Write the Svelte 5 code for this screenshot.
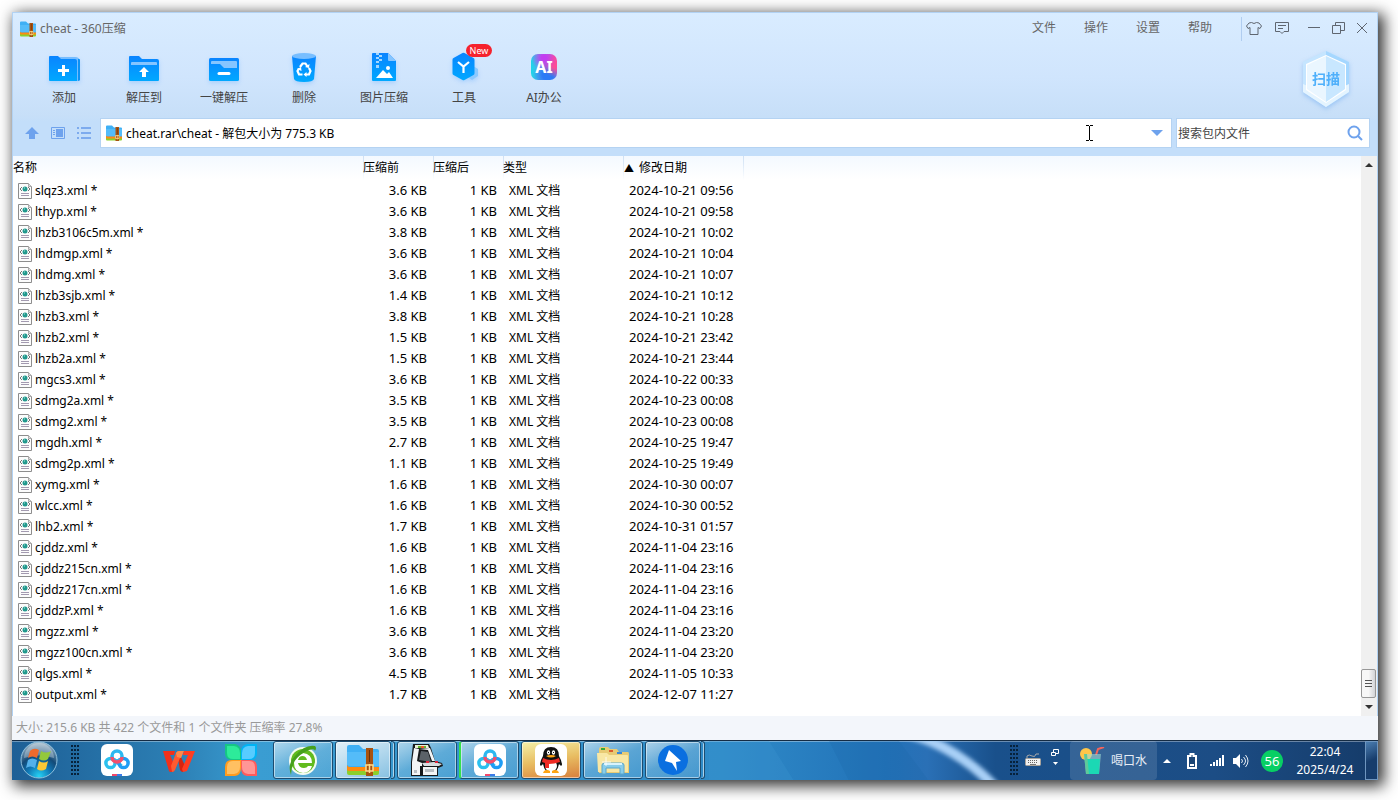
<script lang="ts">
  interface Entry {
    name: string;
    size: string;
    date: string;
  }

  const menus = ["文件", "操作", "设置", "帮助"];

  const tools = [
    { id: "add", label: "添加" },
    { id: "extract", label: "解压到" },
    { id: "quick", label: "一键解压" },
    { id: "delete", label: "删除" },
    { id: "image", label: "图片压缩" },
    { id: "tools", label: "工具" },
    { id: "ai", label: "AI办公" },
  ];

  const entries: Entry[] = [
    { name: "slqz3.xml", size: "3.6 KB", date: "2024-10-21 09:56" },
    { name: "lthyp.xml", size: "3.6 KB", date: "2024-10-21 09:58" },
    { name: "lhzb3106c5m.xml", size: "3.8 KB", date: "2024-10-21 10:02" },
    { name: "lhdmgp.xml", size: "3.6 KB", date: "2024-10-21 10:04" },
    { name: "lhdmg.xml", size: "3.6 KB", date: "2024-10-21 10:07" },
    { name: "lhzb3sjb.xml", size: "1.4 KB", date: "2024-10-21 10:12" },
    { name: "lhzb3.xml", size: "3.8 KB", date: "2024-10-21 10:28" },
    { name: "lhzb2.xml", size: "1.5 KB", date: "2024-10-21 23:42" },
    { name: "lhzb2a.xml", size: "1.5 KB", date: "2024-10-21 23:44" },
    { name: "mgcs3.xml", size: "3.6 KB", date: "2024-10-22 00:33" },
    { name: "sdmg2a.xml", size: "3.5 KB", date: "2024-10-23 00:08" },
    { name: "sdmg2.xml", size: "3.5 KB", date: "2024-10-23 00:08" },
    { name: "mgdh.xml", size: "2.7 KB", date: "2024-10-25 19:47" },
    { name: "sdmg2p.xml", size: "1.1 KB", date: "2024-10-25 19:49" },
    { name: "xymg.xml", size: "1.6 KB", date: "2024-10-30 00:07" },
    { name: "wlcc.xml", size: "1.6 KB", date: "2024-10-30 00:52" },
    { name: "lhb2.xml", size: "1.7 KB", date: "2024-10-31 01:57" },
    { name: "cjddz.xml", size: "1.6 KB", date: "2024-11-04 23:16" },
    { name: "cjddz215cn.xml", size: "1.6 KB", date: "2024-11-04 23:16" },
    { name: "cjddz217cn.xml", size: "1.6 KB", date: "2024-11-04 23:16" },
    { name: "cjddzP.xml", size: "1.6 KB", date: "2024-11-04 23:16" },
    { name: "mgzz.xml", size: "3.6 KB", date: "2024-11-04 23:20" },
    { name: "mgzz100cn.xml", size: "3.6 KB", date: "2024-11-04 23:20" },
    { name: "qlgs.xml", size: "4.5 KB", date: "2024-11-05 10:33" },
    { name: "output.xml", size: "1.7 KB", date: "2024-12-07 11:27" },
  ];

  // look: pinned has no frame, stack has extra windows behind it
  const apps = [
    { id: "netdisk", title: "百度网盘", look: "pinned" },
    { id: "wps", title: "WPS", look: "pinned" },
    { id: "petals", title: "桌面", look: "pinned" },
    { id: "browser", title: "浏览器", look: "open" },
    { id: "zip", title: "360压缩", look: "active stack" },
    { id: "arcade", title: "街机", look: "open" },
    { id: "netdisk", title: "百度网盘", look: "open busy" },
    { id: "qq", title: "QQ", look: "alert" },
    { id: "explorer", title: "资源管理器", look: "open" },
    { id: "thunder", title: "迅雷", look: "open stack" },
  ];

  let path = $state("cheat.rar\\cheat - 解包大小为 775.3 KB");
  let query = $state("");
</script>

{#snippet zipIcon()}
  <svg viewBox="0 0 32 32" aria-hidden="true">
    <path d="M0 24h32v5a2 2 0 0 1-2 2H2a2 2 0 0 1-2-2z" fill="#8ccf2c" />
    <path d="M0 21h32v6H2a2 2 0 0 1-2-2z" fill="#ff8a10" />
    <path d="M0 3a2 2 0 0 1 2-2h10l4 4h14a2 2 0 0 1 2 2v16H3a3 3 0 0 1-3-3z" fill="#3fb0f5" />
    <path d="M0 8h32v14H3a3 3 0 0 1-3-3z" fill="#62c4fb" opacity=".6" />
    <path d="M19 4h7v28h-7z" fill="#a8520f" />
    <path d="M22 6h1v12h-1z" fill="#6b3008" />
    <path d="M19 21h7v6h-7zM22.500 20v9" fill="none" stroke="#ffdb8a" stroke-width="1.500" />
  </svg>
{/snippet}

{#snippet fileIcon()}
  <svg class="file-icon" viewBox="0 0 14 16" aria-hidden="true">
    <path d="M.5.500h10l3 3v12H.500z" fill="#fcfcfc" stroke="#8d8d8d" />
    <path d="M10.500.500v3h3" fill="#ddd" stroke="#aaa" />
    <path d="M4 4 2 6l2 2M10 4l2 2-2 2" fill="none" stroke="#777" />
    <circle cx="7" cy="6" r="2.500" fill="#22998e" />
    <path d="M6 5h1" stroke="#a5e4d5" />
    <path d="M3 10.500h8M3 12.500h8" stroke="#a39ab0" />
  </svg>
{/snippet}

{#snippet toolIcon(id: string)}
  <svg class="tool-icon" viewBox="0 0 32 32" aria-hidden="true">
    <defs>
      <linearGradient id="blue-{id}" x1="0" y1="0" x2="0" y2="1">
        <stop offset="0" stop-color="#0a84ff" />
        <stop offset="1" stop-color="#00a8ff" />
      </linearGradient>
    </defs>
    {#if id === "add"}
      <path d="M4 6h23a5 5 0 0 1 5 4v19a1 1 0 0 1-1 1H4z" fill="#76bdff" />
      <path d="M30 8h1a1 1 0 0 1 1 1v20l-2 1z" fill="#0b92f5" />
      <path d="M1 6a1 1 0 0 1 1-1h8l3 3h14a2 2 0 0 1 2 2v20H2a1 1 0 0 1-1-1z" fill="url(#blue-{id})" />
      <path d="M15.500 14v11M10 19.500h11" stroke="#fff" stroke-width="3" />
    {:else if id === "extract"}
      <path d="M1 6a1 1 0 0 1 1-1h9l3 3h15a2 2 0 0 1 2 2v19a1 1 0 0 1-1 1H2a1 1 0 0 1-1-1z" fill="url(#blue-{id})" />
      <path d="M3 14v-2a1 1 0 0 1 1-1h24a1 1 0 0 1 1 1v2z" fill="#86c5ff" />
      <path d="m16 16 5 5h-3v5h-4v-5h-3z" fill="#fff" />
    {:else if id === "quick"}
      <rect x="1" y="7" width="30" height="23" rx="1.500" fill="url(#blue-{id})" />
      <path d="M3 11a1 1 0 0 1 1-1h24a1 1 0 0 1 1 1v6H16l-4-4H3z" fill="#86c5ff" />
      <path d="M11 22.500h10" stroke="#fff" stroke-width="3" stroke-linecap="round" />
    {:else if id === "delete"}
      <path d="m4 5 2 23q1 3 10 3t10-3l2-23z" fill="url(#blue-{id})" />
      <ellipse cx="16" cy="5" rx="12" ry="3" fill="#78beff" />
      <path d="m12 16 2.500-3.500h3l2 3M21 17l1.500 3-1.500 3.500h-3M14.500 23.500H11L9.500 20l1.500-2.500" fill="none" stroke="#fff" stroke-width="2.200" />
      <path d="m17 16 4 1 .500-4zM18.500 21v5l-3-2.500zM9 18l4-2 .500 4z" fill="#fff" />
    {:else if id === "image"}
      <path d="M4 3a1 1 0 0 1 1-1h15l8 8v19a1 1 0 0 1-1 1H5a1 1 0 0 1-1-1z" fill="url(#blue-{id})" />
      <path d="M20 2v7a1 1 0 0 0 1 1h7z" fill="#86c5ff" />
      <path d="M8 2h3v2H8zM11 4h3v2h-3zM8 6h3v2H8zM11 8h3v2h-3zM8 10h3v2H8zM8 14h3v3H8z" fill="#a3d6ff" />
      <circle cx="20" cy="17" r="2" fill="#fff" />
      <path d="m8 27 7-8 4 4 2-2 4 6z" fill="#fff" />
    {:else if id === "tools"}
      <path d="m25 15 5 3v7l-6 4-6-4z" fill="#8bc9ff" />
      <path d="M14.500 2a2 2 0 0 1 2 0l9 5a2 2 0 0 1 1 2v13a2 2 0 0 1-1 2l-9 5a2 2 0 0 1-2 0l-9-5a2 2 0 0 1-1-2V9a2 2 0 0 1 1-2z" fill="url(#blue-{id})" />
      <path d="m10 11 5.500 4.500L21 11M15.500 15.500V22" fill="none" stroke="#fff" stroke-width="2.200" />
    {/if}
  </svg>
{/snippet}

{#snippet netdiskIcon()}
  <svg viewBox="0 0 32 32" aria-hidden="true">
    <rect width="32" height="32" rx="6" fill="#fff" />
    <g fill="none" stroke-width="3.500">
      <path d="m12.500 15 8 7" stroke="#2bc0ee" />
      <circle cx="9.500" cy="19" r="4.600" stroke="#2bc0ee" />
      <path d="m19.500 15-4 4" stroke="#1f8cf0" />
      <circle cx="22.500" cy="19" r="4.600" stroke="#1f9df5" />
      <circle cx="16" cy="12" r="5" stroke="#2db8f0" />
      <path d="M11 13a5 5 0 0 0 10 0" stroke="#f4506c" />
    </g>
    <path d="M11 30h5v2h-5z" fill="#f2486a" />
    <path d="M16 30h5v2h-5z" fill="#3b7be8" />
  </svg>
{/snippet}

{#snippet appIcon(id: string)}
  {#if id === "netdisk"}
    {@render netdiskIcon()}
  {:else if id === "zip"}
    {@render zipIcon()}
  {:else if id === "wps"}
    <svg viewBox="0 0 32 32" aria-hidden="true">
      <path d="M0 7h12l-1 4H7l5 11-1 5q-1 1-3 1t-2-1z" fill="#f2301a" />
      <path d="m15 15 3-2 4 9-2 6q-2 0-3-2z" fill="#d8240f" />
      <path d="M9 28q2 0 3-2l8-19h-4q-2 0-3 2L8 22z" fill="#ff5a30" />
      <path d="M13 9q1-2 3-2h5l-3 7-4-1z" fill="#ff8848" />
      <path d="m20 28 4-1 8-20H21l-1 4h5l-6 14z" fill="#ff3d22" />
    </svg>
  {:else if id === "petals"}
    <svg viewBox="0 0 32 32" aria-hidden="true">
      <path d="M0 0h10q6 1 6 8v8H7q-7 0-7-7z" fill="#16c784" />
      <path d="M32 0H22q-6 1-6 8v8h9q7 0 7-7z" fill="#00b4f5" />
      <path d="M0 32h10q6-1 6-8v-8H7q-7 0-7 7z" fill="#ff9b1e" />
      <path d="M32 32H22q-6-1-6-8v-8h9q7 0 7 7z" fill="#ff5b5b" />
      <path d="M2 2h7q6 1 6 7v6H8q-6 0-6-6z" fill="#2deb9a" />
      <path d="M30 2h-7q-6 1-6 7v6h7q6 0 6-6z" fill="#57ccff" />
      <path d="M2 30h7q6-1 6-7v-6H8q-6 0-6 6z" fill="#ffc062" />
      <path d="M30 30h-7q-6-1-6-7v-6h7q6 0 6 6z" fill="#ff9696" />
    </svg>
  {:else if id === "browser"}
    <svg viewBox="0 0 32 32" aria-hidden="true">
      <circle cx="16" cy="17" r="14" fill="#f4fbf0" />
      <circle cx="16" cy="17" r="12" fill="#62bb1e" />
      <path d="M24 19H11q1 5 6 5 3 0 4-2h4q-2 7-9 7-9-1-9-10 1-10 9-10 9 1 9 10zM11 16h9q-1-4-4.500-4T11 16z" fill="#fff" />
      <path d="M4 31Q0 20 8 12 18 0 28 2q2 2 0 5 0-3-6-1Q12 10 7 18q-3 7-3 13z" fill="#46a01c" />
    </svg>
  {:else if id === "arcade"}
    <svg viewBox="0 0 32 32" aria-hidden="true">
      <path d="M2 0h16l2 4 4 13 7 2 1 3-5 2v8H0V18z" fill="#16191c" />
      <path d="M3 4 1 18v13h8v-9h2v-3L6 17 8 5zM12 23h14v8H12zM8 5l9 1 4 11h3L19 4z" fill="#f3f5f6" />
      <path d="M4 1h13l1 3H4z" fill="#eaf0d8" />
      <path d="M7 2h8v2H7z" fill="#62b82a" />
      <path d="M10 2h3v2h-3z" fill="#f05a2a" />
      <path d="m10 7 7 1 3 10-12-2z" fill="#5b6268" />
      <path d="m11 19 12-1 8 2-3 2H13z" fill="#d8dde0" />
      <path d="M15 17h3v2h-3zM24 17h3v2h-3z" fill="#e0263c" />
      <path d="M14 25h9v3h-9zM3 26h3v3H3z" fill="#b9bfc4" />
    </svg>
  {:else if id === "qq"}
    <svg viewBox="0 0 32 32" aria-hidden="true">
      <rect width="32" height="32" rx="6" fill="#fff" />
      <path d="M16 3q8 0 8 9 3 5 3 9-1 2-3-1-1 5-3 7H11q-2-2-3-7-2 3-3 1 0-4 3-9 0-9 8-9z" fill="#111" />
      <ellipse cx="16" cy="22" rx="6" ry="5.500" fill="#fff" />
      <path d="M8 14q8 4 16 0l1 4q-6 2-11 2v4h-4v-5l-3-1z" fill="#ee2a24" />
      <ellipse cx="13.500" cy="8.500" rx="1.600" ry="2.300" fill="#fff" />
      <ellipse cx="18.500" cy="8.500" rx="1.600" ry="2.300" fill="#fff" />
      <path d="M13.500 8v1M18.500 8v1" stroke="#111" />
      <path d="M11 12q5-2 10 0-5 3-10 0zM9 27q3-2 6 0v2H8zM23 27q-3-2-6 0v2h7z" fill="#ffa514" />
    </svg>
  {:else if id === "explorer"}
    <svg viewBox="0 0 32 32" aria-hidden="true">
      <path d="M2 5q0-2 2-2h7l2 2h7l2 3h9q1 0 1 2v19H2z" fill="#e8cb74" />
      <path d="M4 4h4v2H4z" fill="#36a83a" />
      <path d="M12 6h4v2h-4z" fill="#dc5b2c" />
      <path d="M20 8h5v2h-5z" fill="#3687d8" />
      <path d="M0 9h10l2 2h18q1 0 1 1v16H1z" fill="#f8e7a4" />
      <path d="M5 30V21q0-2 3-2h16q3 0 3 2v9h-4v-6H9v6z" fill="#88cdea" stroke="#5aa6ca" />
      <path d="M7 20h18" stroke="#d8f3fc" stroke-width="2" />
      <path d="M9 13v9M5 18h9" stroke="#fff" opacity=".8" />
    </svg>
  {:else if id === "thunder"}
    <svg viewBox="0 0 32 32" aria-hidden="true">
      <circle cx="16" cy="16" r="15" fill="#0a6fe0" />
      <path d="m12 6-4 11 7 2 5 8-1-9 5-1z" fill="#fff" />
    </svg>
  {/if}
{/snippet}

{#snippet grip()}
  <span class="grip"></span>
{/snippet}

<div class="desktop">
  <div class="window">
    <header class="chrome">
      <div class="titlebar">
        <span class="small-icon">{@render zipIcon()}</span>
        <h1>cheat - 360压缩</h1>
        <nav class="menus">
          {#each menus as menu}
            <button>{menu}</button>
          {/each}
        </nav>
        <div class="controls">
          <button aria-label="皮肤">
            <svg viewBox="0 0 16 16"><path d="M5.500 1.500 3 2 .500 5 2 7.500l2-1v7h8v-7l2 1L15.500 5 13 2l-2.500-.500Q8 3.500 5.500 1.500z" /></svg>
          </button>
          <button aria-label="反馈">
            <svg viewBox="0 0 16 16"><path d="M1.500 1.500h13v9H10l-2 2-2-2H1.500zM4 4.500h8M4 7.500h5" /></svg>
          </button>
          <button class="gap" aria-label="最小化">
            <svg viewBox="0 0 16 16"><path d="M2 6.500h12" /></svg>
          </button>
          <button aria-label="还原">
            <svg viewBox="0 0 16 16"><path d="M2.500 4.500h8v8h-8zM5.500 4V1.500h9v8H11" /></svg>
          </button>
          <button aria-label="关闭">
            <svg viewBox="0 0 16 16"><path d="m3 2 10 10M13 2 3 12" /></svg>
          </button>
        </div>
      </div>

      <div class="toolbar">
        {#each tools as tool}
          <button class="tool">
            {#if tool.id === "ai"}
              <span class="ai-icon">AI</span>
            {:else}
              {@render toolIcon(tool.id)}
            {/if}
            <span>{tool.label}</span>
            {#if tool.id === "tools"}
              <em class="badge">New</em>
            {/if}
          </button>
        {/each}
        <button class="scan">
          <svg viewBox="0 0 48 58" aria-hidden="true">
            <path d="M24 1 47 12v30L24 57 1 42V12z" fill="#c5e5ff" />
            <path d="M24 1 47 12v30L24 57z" fill="#a5d7ff" />
            <path d="M1 34 24 44l23-10v8L24 57 1 42z" fill="#e4f4ff" />
            <path d="m24 5 20 9v26L24 53 4 40V14z" fill="#fff" />
            <path d="m24 6 19 9v24L24 52z" fill="#c8e7ff" />
            <path d="M24 6v46L5 39V15z" fill="#eaf6ff" />
          </svg>
          <span>扫描</span>
        </button>
      </div>

      <div class="location">
        <button aria-label="向上">
          <svg viewBox="0 0 14 14"><path d="m7 1 7 7h-4v5H4V8H0z" fill="#6ea2ed" /></svg>
        </button>
        <button aria-label="图标视图">
          <svg viewBox="0 0 14 14"><path d="M.500 1.500h13v11H.500z" fill="none" stroke="#6ea2ed" /><path d="M2 4h2v1H2zM2 6h2v1H2zM2 8h2v1H2zM5 3h7v8H5z" fill="#6ea2ed" /></svg>
        </button>
        <button aria-label="列表视图">
          <svg viewBox="0 0 14 14"><path d="M0 1h2v2H0zM0 6h2v2H0zM0 11h2v2H0zM4 1h10v2H4zM4 6h10v2H4zM4 11h10v2H4z" fill="#7dabee" /></svg>
        </button>
        <div class="address">
          <span class="small-icon">{@render zipIcon()}</span>
          <input type="text" aria-label="路径" bind:value={path} />
          <svg class="caret" viewBox="0 0 9 16" aria-hidden="true"><path d="M1 .500h3M5 .500h3M4.500 1v14M1 15.500h3M5 15.500h3" stroke="#000" /></svg>
          <button aria-label="历史">
            <svg viewBox="0 0 14 14"><path d="M1 4h12L7 10z" fill="#6ea2ed" /></svg>
          </button>
        </div>
        <div class="search">
          <input type="text" aria-label="搜索" placeholder="搜索包内文件" bind:value={query} />
          <button aria-label="搜索">
            <svg viewBox="0 0 16 16"><path d="m11 11 4 4" stroke="#6ea2ed" stroke-width="2" /><circle cx="7" cy="7" r="5.500" fill="none" stroke="#6ea2ed" stroke-width="2" /></svg>
          </button>
        </div>
      </div>
    </header>

    <main class="list">
      <table>
        <colgroup>
          <col class="col-name" />
          <col class="col-size" />
          <col class="col-size" />
          <col class="col-wide" />
          <col class="col-wide" />
          <col />
        </colgroup>
        <thead>
          <tr>
            <th>名称</th>
            <th>压缩前</th>
            <th>压缩后</th>
            <th>类型</th>
            <th class="sorted"><span>▲</span>修改日期</th>
            <th></th>
          </tr>
        </thead>
        <tbody>
          {#each entries as entry}
            <tr>
              <td class="name"><div>{@render fileIcon()}{entry.name} *</div></td>
              <td class="number">{entry.size}</td>
              <td class="number">1 KB</td>
              <td>XML 文档</td>
              <td class="date">{entry.date}</td>
              <td></td>
            </tr>
          {/each}
        </tbody>
      </table>
      <div class="scrollbar">
        <button aria-label="向上滚动"><svg viewBox="0 0 8 4"><path d="m4 0 4 4H0z" fill="#333" /></svg></button>
        <div class="track"><div class="thumb"></div></div>
        <button aria-label="向下滚动"><svg viewBox="0 0 8 4"><path d="m4 4 4-4H0z" fill="#333" /></svg></button>
      </div>
    </main>

    <footer class="status">大小: 215.6 KB 共 422 个文件和 1 个文件夹 压缩率 27.8%</footer>

    <div class="taskbar">
      <button class="start" aria-label="开始">
        <svg viewBox="0 0 38 38" aria-hidden="true">
          <defs>
            <radialGradient id="orb" cx=".5" cy=".95" r=".95">
              <stop offset="0" stop-color="#25d3f5" />
              <stop offset=".35" stop-color="#0f76b4" />
              <stop offset=".6" stop-color="#134a77" />
              <stop offset="1" stop-color="#a4bccd" />
            </radialGradient>
          </defs>
          <circle cx="19" cy="19" r="18" fill="url(#orb)" stroke="#8fc0dc" />
          <path d="M4 17a15 15 0 0 1 30 0q-15-5-30 0z" fill="#fff" opacity=".3" />
          <path d="m10 10q4-4 9-1l-2 8q-5-3-9 0z" fill="#ee6a2c" />
          <path d="m21 10q5 3 10 0l-3 8q-4 3-9 0z" fill="#93c83c" />
          <path d="m8 19q4-3 9 0l-2 8q-5-3-9 0z" fill="#54b1ea" />
          <path d="m19 20q5 3 9 0l-2 8q-5 3-9 0z" fill="#fbc936" />
        </svg>
      </button>
      {@render grip()}
      <div class="apps">
        {#each apps as app}
          <button class="app {app.look}" aria-label={app.title}>
            <span class="face">{@render appIcon(app.id)}</span>
          </button>
        {/each}
      </div>
      <div class="sky">
        <svg viewBox="0 0 300 40" aria-hidden="true">
          <defs>
            <filter id="soft" x="-20%" y="-20%" width="140%" height="140%"><feGaussianBlur stdDeviation="2" /></filter>
          </defs>
          <path d="M0 0h60l25 40H0z" fill="#3b94d0" opacity=".3" />
          <path d="M120 0h70l30 40h-80z" fill="#1962a6" opacity=".2" />
          <path d="M190-10q54 12 96 56" fill="none" stroke="#a9d0f7" stroke-width="10" filter="url(#soft)" />
        </svg>
      </div>
      <div class="tray">
        {@render grip()}
        <svg class="keyboard" viewBox="0 0 16 16" aria-hidden="true">
          <path d="M2 5V3q2-2 5 0t4-2h3" fill="none" stroke="#aaa" />
          <rect x=".5" y="5.500" width="15" height="7" rx="1" fill="#f0f0f0" stroke="#a8a29a" />
          <path d="M3 7.500h10M3 9.500h10" stroke="#666" stroke-dasharray="1 1" />
          <path d="M5 11.500h6" stroke="#777" />
        </svg>
        <svg class="lang" viewBox="0 0 8 24" aria-hidden="true">
          <path d="M.5 3.500h4v3h-4zM2.500 3V.500h5v4H5" fill="none" stroke="#fff" />
          <path d="M2 13h5l-2.500 3z" fill="#fff" />
        </svg>
        <button class="drink">
          <svg viewBox="0 0 26 28" aria-hidden="true">
            <circle cx="7" cy="7" r="6" fill="#ffc64a" />
            <path d="m17 8 2-6 6-2" fill="none" stroke="#f4645c" stroke-width="2" />
            <path d="M5 7h17l-2 20H7z" fill="#9edbd4" opacity=".6" />
            <path d="M6 12h15l-1 15H8z" fill="#1bd8b4" />
            <path d="M5 7h3l2 20H7z" fill="#5fc89a" />
          </svg>
          <span>喝口水</span>
        </button>
        <button class="icon more" aria-label="更多"><svg viewBox="0 0 8 4"><path d="m4 0 4 4H0z" fill="#fff" /></svg></button>
        <svg class="icon battery" viewBox="0 0 10 16" aria-hidden="true"><path d="M1 3h2.500V1h3v2H9v12H1z" fill="#1c4676" stroke="#fff" stroke-width="2" /><path d="M3 11h4v2H3z" fill="#fff" /></svg>
        <svg class="icon" viewBox="0 0 16 16" aria-hidden="true"><path d="M1 11h2v2H1zM4 9h2v4H4zM7 7h2v6H7zM10 5h2v8h-2zM13 2h2v11h-2z" fill="#fff" /></svg>
        <svg class="icon" viewBox="0 0 16 16" aria-hidden="true"><path d="M0 5h3l4-4v14l-4-4H0z" fill="#fff" /><path d="M8.500 6q2 2 0 4M10.500 4q4 4 0 8M12.500 2q5 6 0 12" fill="none" stroke="#e8eef5" /></svg>
        <span class="score">56</span>
        <time class="clock">22:04<br />2025/4/24</time>
        <button class="peek" aria-label="显示桌面"></button>
      </div>
    </div>
  </div>
</div>

<style>
  :global(body) {
    background: #fff;
  }

  .desktop {
    box-sizing: border-box;
    min-height: 100vh;
    padding: 12px 20px 20px 12px;
    display: flex;
    font-family: "Noto Sans", "Noto Sans CJK SC", sans-serif;
    font-size: 12px;
    line-height: 20px;
    color: #000;
  }

  .window {
    flex: 1;
    min-width: 0;
    display: flex;
    flex-direction: column;
    background: #c3defa;
    box-shadow: 4px 4px 14px 2px rgba(0, 0, 0, 0.8);
  }

  button {
    padding: 0;
    border: none;
    background: none;
    font: inherit;
    color: inherit;
    cursor: pointer;
  }

  input {
    flex: 1;
    min-width: 0;
    padding: 2px 0 0;
    border: none;
    outline: none;
    background: none;
    font: inherit;
    color: #000;
  }

  svg {
    display: block;
  }

  .chrome {
    box-sizing: border-box;
    height: 144px;
    border: 1px solid #b2d2f3;
    border-bottom: none;
    background: linear-gradient(#d9ecff, #d0e5fd 45%, #c7dff8 72%, #c3defa 76%);
  }

  .titlebar {
    display: flex;
    align-items: center;
    height: 31px;
    padding: 0 7px;
    color: #666;
  }

  .small-icon {
    flex: none;
    width: 16px;
    height: 16px;
  }

  h1 {
    margin: 0 0 0 4px;
    font-size: 12px;
    font-weight: 400;
  }

  .menus {
    display: flex;
    margin: 0 15px 2px auto;
  }

  .menus button {
    width: 52px;
  }

  .controls {
    display: flex;
    align-items: center;
    gap: 8px;
    height: 24px;
    padding-left: 4px;
    border-left: 1px solid #b0cdf0;
  }

  .controls button {
    width: 16px;
    height: 16px;
  }

  .controls button:nth-child(2) {
    margin-left: 4px;
  }

  .controls .gap {
    margin-left: 8px;
  }

  .controls svg {
    fill: none;
    stroke: #5f6670;
  }

  .toolbar {
    display: flex;
    height: 69px;
    padding: 0 27px 0 11px;
  }

  .tool {
    position: relative;
    display: flex;
    flex-direction: column;
    align-items: center;
    gap: 5px;
    width: 80px;
    padding-top: 7px;
    color: #444;
  }

  .tool-icon {
    width: 32px;
    height: 32px;
    filter: drop-shadow(0 2px 2px rgba(60, 150, 255, 0.25));
  }

  .ai-icon {
    width: 26px;
    height: 26px;
    margin: 3px;
    border-radius: 7px;
    background:
      radial-gradient(circle at 50% 15%, #c33df0 10%, transparent 50%),
      radial-gradient(circle at 100% 30%, #fb4d96 20%, transparent 50%),
      radial-gradient(circle at 65% 80%, #2c7bf5 20%, transparent 55%),
      linear-gradient(90deg, #1bd6ea, #bb72e0);
    color: #fff;
    font-size: 16px;
    font-weight: 700;
    line-height: 26px;
  }

  .badge {
    position: absolute;
    top: 0;
    left: 42px;
    width: 26px;
    border-radius: 7px;
    background: #f5222d;
    color: #fff;
    font-size: 9px;
    font-style: normal;
    line-height: 13px;
  }

  .scan {
    display: grid;
    align-self: flex-start;
    place-items: center;
    margin: 6px 0 0 auto;
    filter: drop-shadow(0 2px 2px rgba(110, 170, 240, 0.5));
  }

  .scan svg,
  .scan span {
    grid-area: 1 / 1;
  }

  .scan svg {
    width: 48px;
    height: 58px;
  }

  .scan span {
    color: #4fb0fb;
    font-size: 14px;
    font-weight: 700;
  }

  .location {
    display: flex;
    align-items: center;
    height: 40px;
    padding: 0 7px 0 12px;
  }

  .location > button {
    width: 14px;
    height: 14px;
    margin-right: 12px;
  }

  .address,
  .search {
    display: flex;
    align-items: center;
    box-sizing: border-box;
    height: 30px;
    border: 1px solid #b5d3f2;
    background: #fff;
  }

  .address {
    position: relative;
    flex: 1;
    gap: 4px;
    margin-right: 4px;
    margin-left: -3px;
    padding: 0 7px 0 5px;
  }

  .address button {
    width: 14px;
    height: 14px;
  }

  .caret {
    position: absolute;
    top: 6px;
    right: 77px;
    width: 9px;
    height: 16px;
  }

  .search {
    width: 194px;
    padding: 0 6px 0 1px;
  }

  .search input::placeholder {
    color: #444;
    opacity: 1;
  }

  .search button {
    width: 16px;
    height: 16px;
  }

  .list {
    flex: 1;
    display: flex;
    align-items: flex-start;
    border: 1px solid #b2d2f3;
    border-width: 0 1px;
    background: linear-gradient(#f3f9ff, #fff 24px);
  }

  table {
    flex: 1;
    min-width: 0;
    table-layout: fixed;
    border-collapse: collapse;
  }

  .col-name {
    width: 350px;
  }

  .col-size {
    width: 70px;
  }

  .col-wide {
    width: 120px;
  }

  th {
    height: 24px;
    padding: 0;
    font-weight: 400;
    text-align: left;
    background: linear-gradient(#cfe0f3, transparent) no-repeat left / 1px 100%;
  }

  th:first-child {
    background: none;
  }

  .sorted span {
    display: inline-block;
    width: 16px;
    font-size: 10px;
    text-indent: 1px;
  }

  td {
    height: 21px;
    padding: 0 6px;
    line-height: 21px;
    white-space: nowrap;
  }

  .name {
    padding-left: 5px;
  }

  .name div {
    display: flex;
    align-items: center;
    gap: 3px;
    white-space: pre;
  }

  .number,
  .date {
    font-size: 13px;
  }

  .number {
    text-align: right;
  }

  .file-icon {
    width: 14px;
    height: 16px;
  }

  .scrollbar {
    align-self: stretch;
    display: flex;
    flex-direction: column;
    width: 15px;
    padding-right: 1px;
    background: #f0f0f0;
  }

  .scrollbar button {
    display: grid;
    place-items: center;
    height: 18px;
  }

  .scrollbar svg {
    width: 8px;
    height: 4px;
  }

  .track {
    flex: 1;
    display: flex;
    flex-direction: column;
    justify-content: flex-end;
  }

  .thumb {
    height: 27px;
    border: 1px solid #979797;
    border-radius: 2px;
    background:
      repeating-linear-gradient(#555 0 1px, transparent 1px 3px) no-repeat center / 7px 7px,
      linear-gradient(90deg, #f7f7f7 50%, #d2d3d6);
  }

  .status {
    height: 24px;
    padding-left: 4px;
    background: #f3f6fb;
    color: #999;
    line-height: 24px;
  }

  .taskbar {
    display: flex;
    box-sizing: border-box;
    height: 40px;
    border-top: 1px solid #152c44;
    background: linear-gradient(90deg, #1d5f96, #2c7fb4 12%, #3a9dd2 18%, #2f8bc8 52%, #2272b8 64%, #2a70b6 67%, #19508b 72%, #1c4d85 88%, #153b69);
    box-shadow: inset 0 1px rgba(255, 255, 255, 0.35);
    color: #fff;
  }

  .start {
    width: 38px;
    height: 38px;
    margin: 0 10px 0 8px;
  }

  .grip {
    flex: none;
    align-self: center;
    width: 9px;
    height: 32px;
    margin-right: 7px;
    background: conic-gradient(from 90deg at 1px 2px, transparent 75%, #07223b 0) 0 0 / 3px 4px;
  }

  .start + .grip {
    margin: 0 7px 0 2px;
  }

  .apps {
    display: flex;
  }

  .app {
    display: flex;
    width: 60px;
    margin: 0 1px;
  }

  .face {
    flex: 1;
    box-sizing: border-box;
    display: grid;
    place-items: center;
    height: 38px;
    border: 1px solid transparent;
  }

  .face svg {
    width: 32px;
    height: 32px;
  }

  .open .face,
  .active .face,
  .alert .face {
    border-color: #1c4c70;
    border-radius: 3px;
    background: linear-gradient(155deg, rgba(255, 255, 255, 0.6), rgba(255, 255, 255, 0.2) 50%, rgba(255, 255, 255, 0.1));
    box-shadow: inset 0 0 0 1px rgba(255, 255, 255, 0.5);
  }

  .active .face {
    background: linear-gradient(155deg, rgba(255, 255, 255, 0.85), rgba(255, 255, 255, 0.4));
  }

  .alert .face {
    background: linear-gradient(170deg, #f4f0a8, #e8bd62 50%, #d77e3c);
  }

  .busy .face {
    border-left: 2px solid #36e04c;
  }

  .stack::after {
    content: "";
    width: 3px;
    height: 36px;
    border: 1px solid #1c4c70;
    border-left: none;
    border-radius: 0 3px 3px 0;
    box-shadow: inset -1px 0 rgba(255, 255, 255, 0.6);
  }

  .sky {
    flex: 1;
    min-width: 0;
    display: flex;
    justify-content: flex-end;
    overflow: hidden;
  }

  .sky svg {
    flex: none;
    width: 300px;
    height: 40px;
  }

  .tray {
    display: flex;
    align-items: center;
  }

  .keyboard {
    width: 16px;
    height: 16px;
    margin-right: 10px;
  }

  .lang {
    width: 8px;
    height: 24px;
    margin-right: 11px;
  }

  .drink {
    display: flex;
    align-items: center;
    gap: 6px;
    height: 39px;
    padding: 0 10px 0 9px;
    border-radius: 4px;
    background: rgba(255, 255, 255, 0.12);
    color: #e6edf6;
  }

  .drink svg {
    width: 26px;
    height: 28px;
  }

  .icon {
    width: 16px;
    height: 16px;
    margin-left: 8px;
  }

  .more {
    width: 8px;
    height: 4px;
    margin: 0 6px;
  }

  .battery {
    width: 10px;
    margin-left: 10px;
    margin-right: 4px;
  }

  .score {
    width: 22px;
    height: 22px;
    margin: 0 12px;
    border-radius: 50%;
    background: #08cf64;
    font-size: 13px;
    line-height: 22px;
    text-align: center;
  }

  .clock {
    width: 60px;
    margin-right: 10px;
    line-height: 18px;
    text-align: center;
    white-space: nowrap;
  }

  .peek {
    align-self: stretch;
    width: 13px;
    border: 1px solid #6f96bf;
    background: linear-gradient(155deg, #4b7db0, #173d6c 50%);
  }
</style>
